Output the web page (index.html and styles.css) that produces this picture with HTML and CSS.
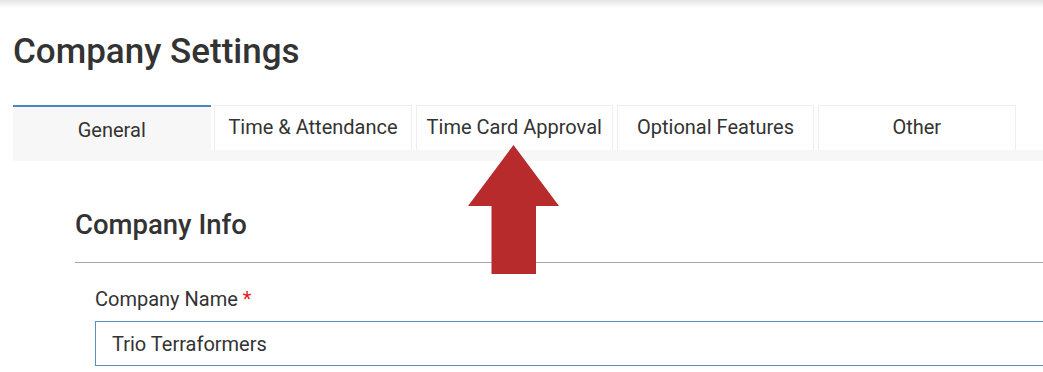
FILE: index.html
```html
<!DOCTYPE html>
<html lang="en">
<head>
  <meta charset="UTF-8">
  <title>Company Settings</title>
  <link rel="stylesheet" href="styles.css">
</head>
<body>

<div class="top-shadow"></div>

<div class="page">
  <h1>Company Settings</h1>

  <!-- Tabs -->
  <div class="tabs">
    <div class="tab active">General</div>
    <div class="tab">Time &amp; Attendance</div>
    <div class="tab">Time Card Approval</div>
    <div class="tab">Optional Features</div>
    <div class="tab">Other</div>
  </div>

  <!-- General tab content -->
  <div class="section">
    <h2>Company Info</h2>
    <div class="field">
      <label for="company-name">Company Name <span class="required">*</span></label>
      <input type="text" id="company-name" value="Trio Terraformers">
    </div>
  </div>
</div>

<!-- Red callout arrow pointing at the tab -->
<svg class="callout-arrow" width="92" height="129" viewBox="0 0 92 129">
  <polygon points="45.5,0 91,61 68,61 68,129 23.5,129 23.5,61 0,61" fill="#b82b2c"/>
</svg>

</body>
</html>
```

FILE: styles.css
```css
/* Base */
body {
  margin: 0;
  font-family: Roboto, "Liberation Sans", Arial, sans-serif;
  color: #333;
  background: #fff;
  overflow: hidden;
  position: relative;
}

.top-shadow {
  height: 8px;
  background: linear-gradient(to bottom, #e4e4e4, #fff);
}

.page {
  padding-left: 13px;
}

/* Title */
h1 {
  margin: 24px 0 0 0;
  font-size: 35px;
  line-height: 40px;
  font-weight: 500;
}

/* Tabs */
.tabs {
  display: flex;
  gap: 3.75px;
  align-items: flex-start;
  height: 56px;
  margin-top: 33px;
  background: linear-gradient(to bottom, transparent 45px, #f7f7f7 45px);
}
.tab {
  box-sizing: border-box;
  width: 197.5px;
  height: 45px;
  padding-top: 9px;
  border: 1px solid #eee;
  border-bottom: none;
  background: #fff;
  text-align: center;
  font-size: 20px;
  line-height: 24px;
}
.tab.active {
  height: 56px;
  padding-top: 11px;
  border: none;
  border-top: 2px solid #4a87c0;
  background: #f7f7f7;
}

/* Section */
.section {
  margin-left: 62px;
}
h2 {
  margin: 0;
  padding: 47px 0 20px 0;
  border-bottom: 1px solid #a6a6a6;
  font-size: 27.5px;
  line-height: 34px;
  font-weight: 500;
}

/* Form */
.field {
  margin-left: 20px;
  padding-top: 24px;
}
label {
  display: block;
  font-size: 20px;
  line-height: 24px;
  margin-bottom: 10px;
}
.required {
  color: #e41b1b;
}
input[type="text"] {
  box-sizing: border-box;
  width: 1000px;
  height: 45px;
  padding: 0 16px;
  border: 1px solid #5b8fbf;
  font-family: inherit;
  font-size: 20px;
  color: #333;
  outline: none;
}

/* Callout */
.callout-arrow {
  position: absolute;
  left: 468px;
  top: 145px;
}
```
